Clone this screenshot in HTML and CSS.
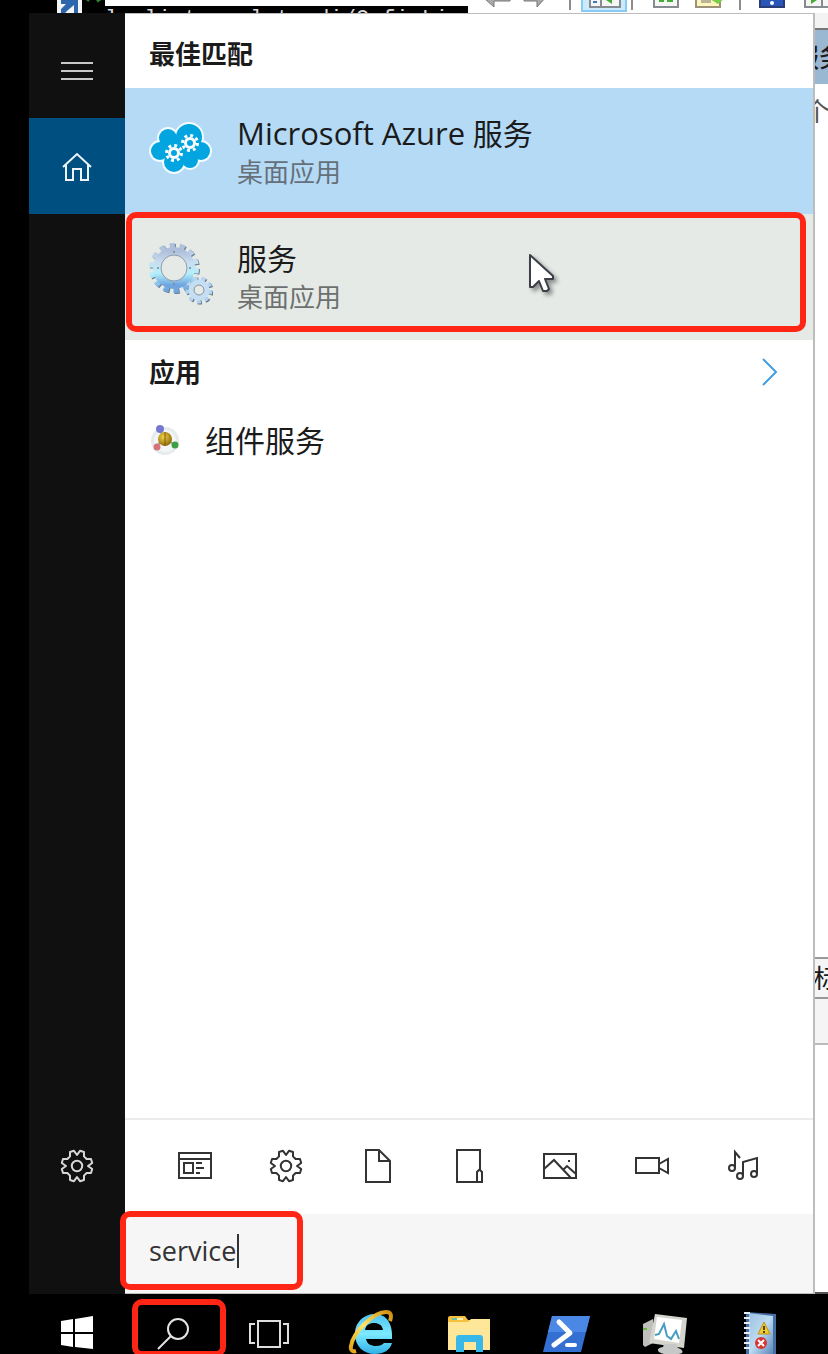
FILE: index.html
```html
<!DOCTYPE html>
<html lang="zh-CN">
<head>
<meta charset="utf-8">
<title>搜索</title>
<link rel="stylesheet" href="styles.css">
</head>
<body>
<svg class="defs" aria-hidden="true">
  <defs>
    <symbol id="gear" viewBox="-17 -17 34 34">
      <path d="M0-11 3-15.2 7-14 7-9.6 9.6-7 14-7 15.2-3 11 0 15.2 3 14 7 9.6 7 7 9.6 7 14 3 15.2 0 11-3 15.2-7 14-7 9.6-9.6 7-14 7-15.2 3-11 0-15.2-3-14-7-9.6-7-7-9.6-7-14-3-15.2Z" fill="none" stroke="currentColor" stroke-width="2" stroke-linejoin="round"/>
      <circle r="5.2" fill="none" stroke="currentColor" stroke-width="2"/>
    </symbol>
    <g id="puffs">
      <circle cx="11" cy="35" r="9"/><circle cx="19" cy="22" r="9"/><circle cx="40" cy="21" r="13"/><circle cx="52" cy="35" r="9"/><circle cx="25" cy="46" r="10"/><circle cx="41" cy="44" r="8"/><circle cx="32" cy="34" r="15"/>
    </g>
    <g id="cog">
      <circle r="4.5" fill="none" stroke="#fff" stroke-width="3"/>
      <circle r="7.5" fill="none" stroke="#fff" stroke-width="3" stroke-dasharray="2.9 2.99"/>
    </g>
    <linearGradient id="steel" x1="0" y1="0" x2="0" y2="1">
      <stop offset="0" stop-color="#aebfdb"/><stop offset=".35" stop-color="#c9dff0"/><stop offset=".65" stop-color="#b5effb"/><stop offset="1" stop-color="#6ea5df"/>
    </linearGradient>
    <linearGradient id="ie" x1="0" y1="0" x2="0" y2="1">
      <stop offset="0" stop-color="#4fc2ee"/><stop offset=".5" stop-color="#7ceaff"/><stop offset="1" stop-color="#2fb0e6"/>
    </linearGradient>
    <linearGradient id="gold" x1="0" y1="1" x2="1" y2="0">
      <stop offset="0" stop-color="#e3a414"/><stop offset=".5" stop-color="#ffe36a"/><stop offset="1" stop-color="#cf8e0c"/>
    </linearGradient>
    <linearGradient id="cover" x1="0" y1="0" x2="1" y2="1">
      <stop offset="0" stop-color="#9fc0de"/><stop offset=".5" stop-color="#bcdcf2"/><stop offset="1" stop-color="#5c86b8"/>
    </linearGradient>
    <radialGradient id="ball" cx=".4" cy=".35" r=".7">
      <stop offset="0" stop-color="#f3d24b"/><stop offset="1" stop-color="#8a6406"/>
    </radialGradient>
  </defs>
</svg>

<div class="desktop">
  <div class="strip" aria-hidden="true">
    <svg class="shortcut" width="26" height="13" viewBox="0 0 26 13"><path fill="#f4f4f4" d="M0 0h25v13H0z"/><path fill="#2d66ad" d="M4 0h17v13h-4V5l-6 5-3 3H4V9l5-5H4z"/></svg>
    <svg class="sprig" width="20" height="13" viewBox="0 0 20 13"><path fill="none" stroke="#2c8a2c" stroke-width="2" d="m2-2 4 3m7-3 2 3 3-2"/></svg>
    <div class="terminal"><pre>l  list  mplate di/CofigLi</pre></div>
    <svg class="tools" width="360" height="13" viewBox="0 0 360 13">
      <path fill="#fff" d="M0 0h360v13H0z"/>
      <path fill="#a9a9a9" stroke="#777" d="m17-1 9 8V1h16V-3zM78-3 69 7V1H56V-3z"/>
      <path stroke="#8c8c8c" stroke-width="2" d="M102 0v10M164 0v10M272 0v10"/>
      <path fill="#cdeafd" stroke="#86cbf4" stroke-width="2" d="M114-2h44v13h-44z"/>
      <path fill="#f6f6f6" stroke="#858b8e" stroke-width="2" d="M122-3h30V7h-30zM133-3V7M186-3h24V7h-24zM337-3h26V7h-26zM354-3V7"/>
      <path fill="#43ac32" d="m138 0 6-3v7zM191-1h5v3h-5zm8 0h6v3h-6zM343-3l6 3-6 4z"/>
      <path stroke="#3c79b8" stroke-width="2" d="M125 2h4"/>
      <path fill="#fff5bd" stroke="#9a9378" stroke-width="2" d="M228-3h24V7h-24z"/>
      <path stroke="#777" d="M233 0h10m-10 2h10"/>
      <path fill="#77cf47" d="m242-1 16-2-8 7z"/>
      <path fill="#2856b8" stroke="#293c77" stroke-width="2" d="M292-3h24V7h-24z"/>
      <circle cx="304" cy="3" r="2" fill="#fff"/>
    </svg>
  </div>

  <main class="menu">
    <nav class="rail" aria-label="导航">
      <button type="button" aria-label="菜单"><svg width="34" height="34" viewBox="0 0 34 34"><path stroke="#c8c8c8" stroke-width="2" d="M1 10h32M1 18h32M1 26h32"/></svg></button>
      <button type="button" class="current" aria-label="主页"><svg width="34" height="34" viewBox="0 0 34 34"><path fill="none" stroke="#eef4f8" stroke-width="2" d="m3 18 14-13 14 13M6 16v15h7V20h8v11h7V16"/></svg></button>
      <button type="button" class="settings" aria-label="设置"><svg width="34" height="34"><use href="#gear"/></svg></button>
    </nav>

    <section class="panel">
      <div class="results">
        <h2>最佳匹配</h2>
        <a class="best selected" href="#azure">
          <svg width="64" height="64" viewBox="0 0 64 64">
            <use href="#puffs" fill="#f2fbff" stroke="#f2fbff" stroke-width="4"/>
            <use href="#puffs" fill="#02a5df"/>
            <use href="#cog" x="25" y="37"/><use href="#cog" x="41" y="27"/>
          </svg>
          <span class="label"><span class="title"><span class="latin">Microsoft Azure</span> 服务</span><span class="kind">桌面应用</span></span>
        </a>
        <a class="best hovered" href="#services">
          <svg width="64" height="64" viewBox="0 0 64 64">
            <g fill="none">
              <circle cx="26" cy="27" r="22" stroke="#6d7f95" stroke-width="6" stroke-dasharray="5.2 4.67"/>
              <circle cx="25" cy="26" r="22" stroke="url(#steel)" stroke-width="6" stroke-dasharray="5.2 4.67"/>
              <circle cx="25" cy="26" r="17" stroke="url(#steel)" stroke-width="8"/>
              <circle cx="25" cy="26" r="13" stroke="#8f9caa"/>
              <circle cx="51" cy="49" r="11" stroke="#63758c" stroke-width="5" stroke-dasharray="4 3.68"/>
              <circle cx="50" cy="48" r="11" stroke="#b3d3ee" stroke-width="5" stroke-dasharray="4 3.68"/>
              <circle cx="50" cy="48" r="8" stroke="#c4def3" stroke-width="5"/>
              <circle cx="50" cy="48" r="5" stroke="#8290a0"/>
            </g>
            <g fill="#788796"><circle cx="25" cy="10" r="1"/><circle cx="9" cy="26" r="1"/><circle cx="41" cy="26" r="1"/><circle cx="25" cy="42" r="1"/></g>
          </svg>
          <span class="label"><span class="title">服务</span><span class="kind">桌面应用</span></span>
          <svg class="pointer" width="32" height="44" viewBox="0 0 32 44"><path fill="#fff" stroke="#3d3f48" stroke-width="2" stroke-linejoin="round" d="M2 2v32h3l6-6 4 10h4l2-2-4-10h8v-3z"/></svg>
          <span class="mark"></span>
        </a>
        <h2 class="more"><a href="#apps">应用<svg width="18" height="28" viewBox="0 0 18 28"><path fill="none" stroke="#3f9fe2" stroke-width="2" d="m2 1 13 13L2 27"/></svg></a></h2>
        <a class="app" href="#component">
          <svg width="32" height="32" viewBox="0 0 32 32">
            <circle cx="16" cy="16" r="14" fill="#e6ebec"/><circle cx="16" cy="16" r="11" fill="#f3f6f6"/>
            <path stroke="#9aa" stroke-width="2" d="m15 13-5-10m5 10 11 7m-11-7-8 9"/>
            <circle cx="11" cy="4" r="4" fill="#7479cf"/><circle cx="26" cy="20" r="3.5" fill="#3f9f47"/><circle cx="8" cy="22" r="3.5" fill="#d77279"/>
            <circle cx="16" cy="14" r="7" fill="url(#ball)"/><path stroke="#7b5804" d="M16 7v14"/>
          </svg>
          <span class="title">组件服务</span>
        </a>
      </div>

      <div class="filters">
        <button type="button" aria-label="应用"><svg width="34" height="34" viewBox="0 0 34 34"><path d="M1 4h32v25H1zM1 10h32M6 14h9v10H6zM18 14h6m-6 5h8m-8 5h4"/></svg></button>
        <button type="button" aria-label="设置"><svg width="34" height="34"><use href="#gear"/></svg></button>
        <button type="button" aria-label="文档"><svg width="34" height="34" viewBox="0 0 34 34"><path d="M5 1h13l11 11v21H5zM18 1v11h11"/></svg></button>
        <button type="button" aria-label="文件夹"><svg width="34" height="34" viewBox="0 0 34 34"><path d="M5 1h23v20l2 2v10H5zM25 33V23l3-3"/></svg></button>
        <button type="button" aria-label="照片"><svg width="34" height="34" viewBox="0 0 34 34"><path d="M1 5h32v24H1zM1 20l10-9 17 18M20 21l4-4 9 8"/><path d="M26 11v2"/></svg></button>
        <button type="button" aria-label="视频"><svg width="34" height="34" viewBox="0 0 34 34"><path d="M1 9h23v15H1zM24 15l9-5v14l-9-5"/></svg></button>
        <button type="button" aria-label="音乐"><svg width="34" height="34" viewBox="0 0 34 34"><path d="M9 19V3l5 6M17 27V13l14-4v15"/><circle cx="6" cy="19" r="3"/><circle cx="14" cy="27" r="3"/><circle cx="28" cy="25" r="3"/></svg></button>
      </div>

      <div class="search">
        <input type="text" value="service" aria-label="搜索"><span class="caret"></span>
        <span class="mark"></span>
      </div>
    </section>

    <aside class="behind" aria-hidden="true">
      <div class="edge"></div>
      <div class="band">服务</div>
      <div class="entry">个</div>
      <div class="tab">标准</div>
      <div class="status"></div>
      <div class="foot"></div>
    </aside>
  </main>

  <footer class="taskbar">
    <button type="button" aria-label="开始"><svg width="96" height="60" viewBox="0 0 96 60"><path fill="#fff" d="m32 27 12-2v13H32zM46 25l18-3v16H46zM32 40h12v13l-12-2zM46 40h18v15l-18-2z"/></svg></button>
    <button type="button" aria-label="搜索"><svg width="96" height="60" viewBox="0 0 96 60"><g fill="none" stroke="#e4e4e4" stroke-width="2"><circle cx="53" cy="35" r="10"/><path d="M46 42 33 55"/></g></svg><span class="mark"></span></button>
    <button type="button" aria-label="任务视图"><svg width="96" height="60" viewBox="0 0 96 60"><path fill="none" stroke="#dedede" stroke-width="2" d="M37 27h22v26H37zM34 30h-5v19h5M62 30h5v19h-5"/></svg></button>
    <div class="pinned">
      <button type="button" aria-label="Internet Explorer"><svg width="96" height="60" viewBox="0 0 96 60">
        <path fill="url(#ie)" d="M68 45H42c1 5 5 7 10 7 4 0 6-1 8-3h8c-2 7-8 11-17 11-12 0-20-8-20-20 0-12 9-20 20-20 11 0 18 9 17 25zM41 36h18c-1-5-4-7-9-7s-8 2-9 7z"/>
        <path fill="none" stroke="url(#gold)" stroke-width="4" d="M66 27c2-6 1-9-4-9-12 0-33 20-35 34-1 5 2 6 5 5"/>
      </svg></button>
      <button type="button" aria-label="文件资源管理器"><svg width="96" height="60" viewBox="0 0 96 60">
        <path fill="#f5bf40" d="M27 24q0-2 2-2h15l3 4h22v8H27z"/><path fill="#6cc4a0" d="M31 24h5v2h-5z"/><path fill="#fff0b5" d="M36 24h6v2h-6z"/>
        <path fill="#ffe79a" d="M27 28h20l3-3h19v31H27z"/><path fill="#37b8e8" d="M35 58V44q0-3 3-3h21q3 0 3 3v14h-7V48H43v10z"/>
      </svg></button>
      <button type="button" aria-label="PowerShell"><svg width="96" height="60" viewBox="0 0 96 60">
        <path fill="#3470d2" d="M34 22h38l-9 36H25z"/><path fill="#4b87e4" d="M34 22h38l-4 16H30z"/>
        <path fill="none" stroke="#fff" stroke-width="5" stroke-linecap="round" stroke-linejoin="round" d="m41 28 11 11-16 12"/><path stroke="#fff" stroke-width="4" stroke-linecap="round" d="M49 51h8"/>
      </svg></button>
      <button type="button" aria-label="服务器管理器"><svg width="96" height="60" viewBox="0 0 96 60">
        <path fill="#bfc0bb" d="m28 30 10-5v24l-8 4-2-2z"/><path fill="#69bd3b" d="M28 34h4v2h-4z"/>
        <path fill="#d5d5ce" d="m40 20 32 4-3 30-35-5z"/><path fill="#fff" d="m42 23 25 3-3 23-25-4z"/>
        <path fill="none" stroke="#459cc4" stroke-width="2" d="m40 41 4-1 5-10 3 12 4 3 5-8 3 8"/>
        <path fill="#c6c8c7" d="M49 50h12l2 4c6 2 6 6 0 6H49c-8-2-8-6-1-7z"/>
      </svg></button>
      <button type="button" aria-label="事件查看器"><svg width="96" height="60" viewBox="0 0 96 60">
        <path fill="#486fa4" d="m34 18 30 2v40H34z"/><path fill="url(#cover)" d="m37 19 24 3v38H37z"/>
        <path stroke="#e6edf4" stroke-width="2" d="M32 19h6m-6 5h6m-6 5h6m-6 5h6m-6 5h6m-6 5h6m-6 5h6m-6 5h6"/>
        <path fill="#f1cd31" stroke="#bd9418" d="m52 28 6 12H46z"/><path stroke="#594205" stroke-width="2" d="M52 32v4m0 1v2"/>
        <circle cx="49" cy="49" r="6" fill="#d73535"/><path stroke="#fff" stroke-width="2" d="m46 46 6 6m0-6-6 6"/>
      </svg></button>
    </div>
  </footer>
</div>
</body>
</html>
```
FILE: styles.css
```css
* { box-sizing: border-box; }

body {
  margin: 0;
  background: #000;
  color: #1b1b1b;
  font-family: "Open Sans", "Noto Sans CJK SC", sans-serif;
  overflow: hidden;
}

.defs { position: absolute; width: 0; height: 0; }

button {
  display: flex;
  align-items: center;
  justify-content: center;
  padding: 0;
  border: 0;
  background: none;
  color: inherit;
}

a { color: inherit; text-decoration: none; }

.desktop { display: flex; flex-direction: column; height: 100vh; }

/* Windows showing above the menu */
.strip { display: flex; flex: none; height: 13px; padding-left: 57px; overflow: hidden; }
.strip svg { flex: none; }
.sprig { margin-right: 2px; }
.terminal { flex: none; width: 363px; height: 13px; border-top: 6px solid #fff; overflow: hidden; }
.terminal pre {
  margin: 0;
  color: #d8d8d8;
  font: 22px/28px "Liberation Mono", monospace;
}

.menu { display: flex; flex: 1; min-height: 0; padding-left: 29px; }

.rail {
  display: flex;
  flex: none;
  flex-direction: column;
  width: 96px;
  padding: 9px 0 80px;
  background: #101010;
  color: #d6d6d6;
}
.rail button { flex: none; height: 96px; }
.rail .current { background: #004f81; }
.rail .settings { margin-top: auto; }

.panel {
  display: flex;
  flex: 1;
  flex-direction: column;
  min-width: 0;
  border: solid #bdbdbd;
  border-width: 1px 2px 1px 0;
  background: #fff;
}
.results { flex: 1; }

h2 { margin: 0; padding: 6px 24px 0; font-size: 26px; font-weight: 700; line-height: 68px; }
.more { padding: 0 24px 4px; line-height: 64px; }
.more a { display: flex; align-items: center; justify-content: space-between; padding-right: 10px; }

.best { display: flex; position: relative; align-items: center; gap: 24px; height: 126px; padding: 0 24px; }
.best > svg { flex: none; margin-bottom: 6px; }
.selected { background: #b4daf5; }
.hovered { background: #e5eae6; }
.label { display: flex; flex-direction: column; }
.title { font-size: 30px; line-height: 40px; white-space: nowrap; }
.latin { font-size: 31px; }
.kind { color: #66707a; font-size: 26px; line-height: 36px; }
.hovered .kind { color: #6d706e; }
.best .pointer { position: absolute; left: 403px; top: 39px; filter: drop-shadow(3px 3px 2px #0006); }

.app { display: flex; align-items: center; gap: 24px; height: 66px; padding: 0 24px; }

/* Red call-out frames */
.mark { position: absolute; border: 6px solid #ff2615; border-radius: 10px; pointer-events: none; }
.best .mark { inset: -2px 7px 8px 1px; }
.search .mark { left: -5px; top: -3px; width: 183px; height: 79px; }
.taskbar .mark { left: 7px; top: 5px; width: 94px; height: 58px; }

.filters { display: flex; flex: none; height: 96px; padding: 0 24px 2px; border-top: 2px solid #ebebeb; color: #333; }
.filters button { flex: 1; }
.filters svg { fill: none; stroke: currentColor; stroke-width: 2; }

.search { display: flex; position: relative; flex: none; align-items: center; height: 79px; padding: 0 24px 6px; background: #f6f6f6; }
.search input {
  width: 88px;
  padding: 0;
  border: 0;
  outline: 0;
  background: none;
  color: #333;
  font: 27px/36px "Open Sans", sans-serif;
}
.caret { width: 2px; height: 34px; background: #333; }

/* Windows showing to the right of the menu */
.behind { display: flex; flex: none; flex-direction: column; width: 13px; background: #fff; overflow: hidden; white-space: nowrap; }
.edge { height: 17px; border-bottom: 2px solid #777; background: #f3f3f3; }
.band { height: 54px; background: #9bb8d3; font-size: 26px; font-weight: 500; line-height: 54px; text-indent: -22px; }
.entry { flex: 1; color: #555; font-size: 26px; line-height: 54px; text-indent: -11px; }
.tab { height: 42px; border: solid #999; border-width: 2px 0; background: #f5f5f5; font-size: 26px; line-height: 38px; text-indent: -2px; }
.status { height: 46px; border-bottom: 2px solid #bbb; background: #f5f5f5; }
.foot { height: 249px; border-bottom: 2px solid #555; }

.taskbar { display: flex; flex: none; height: 60px; padding-left: 29px; overflow: hidden; background: #000; }
.taskbar button { position: relative; flex: none; width: 96px; height: 60px; }
.pinned { display: flex; gap: 1px; padding-left: 7px; }
```
